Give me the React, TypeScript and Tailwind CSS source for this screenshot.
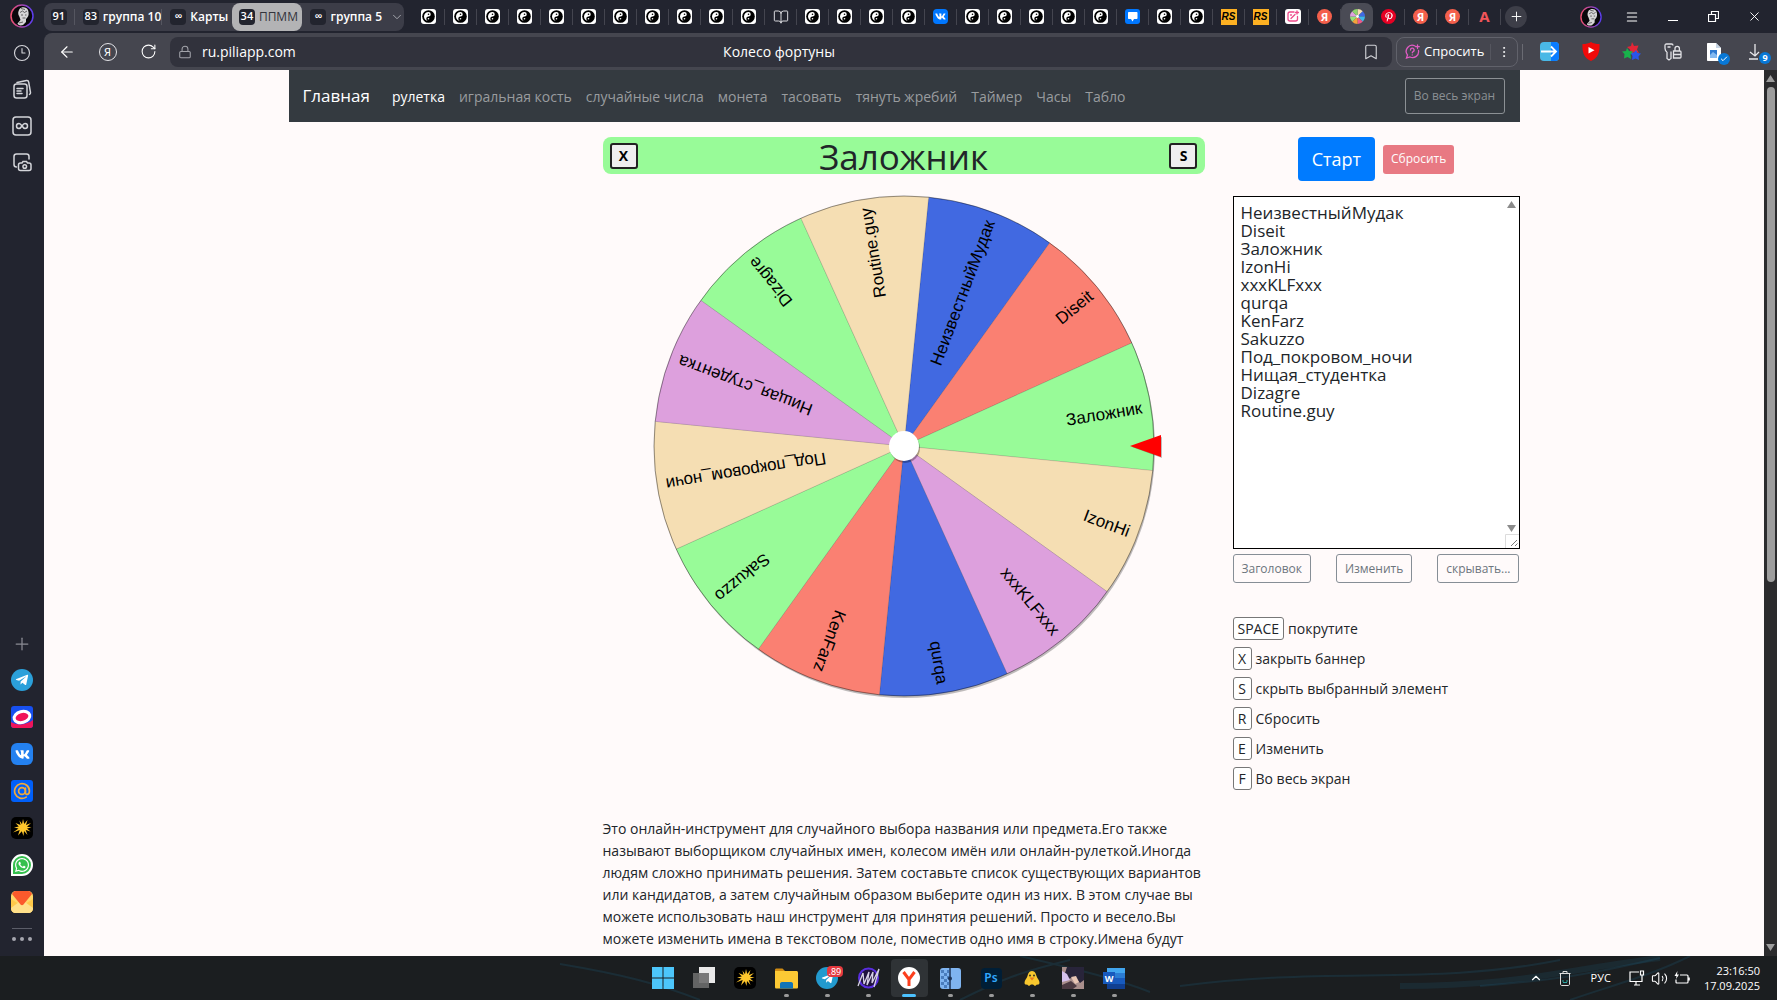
import { ReactNode, useState } from 'react';
import {
    ArrowLeft,
    Bookmark,
    BookOpen,
    Check,
    ChevronDown,
    ChevronUp,
    Clock3,
    EllipsisVertical,
    Lock,
    Menu,
    Plus,
    RotateCw,
    Volume2,
    X,
} from 'lucide-react';
import { FaPinterestP, FaTelegramPlane, FaVk, FaWhatsapp } from 'react-icons/fa';

const SLICES = [
    { name: 'НеизвестныйМудак', color: '#4169e1' },
    { name: 'Diseit', color: '#fa8072' },
    { name: 'Заложник', color: '#98fb98' },
    { name: 'IzonHi', color: '#f5deb3' },
    { name: 'xxxKLFxxx', color: '#dda0dd' },
    { name: 'qurqa', color: '#4169e1' },
    { name: 'KenFarz', color: '#fa8072' },
    { name: 'Sakuzzo', color: '#98fb98' },
    { name: 'Под_покровом_ночи', color: '#f5deb3' },
    { name: 'Нищая_студентка', color: '#dda0dd' },
    { name: 'Dizagre', color: '#98fb98' },
    { name: 'Routine.guy', color: '#f5deb3' },
];

const NAV_LINKS = ['рулетка', 'игральная кость', 'случайные числа', 'монета', 'тасовать', 'тянуть жребий', 'Таймер', 'Часы', 'Табло'];

const SHORTCUTS = [
    ['SPACE', 'покрутите'],
    ['X', 'закрыть баннер'],
    ['S', 'скрыть выбранный элемент'],
    ['R', 'Сбросить'],
    ['E', 'Изменить'],
    ['F', 'Во весь экран'],
];

const ABOUT = [
    'Это онлайн-инструмент для случайного выбора названия или предмета.Его также',
    'называют выборщиком случайных имен, колесом имён или онлайн-рулеткой.Иногда',
    'людям сложно принимать решения. Затем составьте список существующих вариантов',
    'или кандидатов, а затем случайным образом выберите один из них. В этом случае вы',
    'можете использовать наш инструмент для принятия решений. Просто и весело.Вы',
    'можете изменить имена в текстовом поле, поместив одно имя в строку.Имена будут',
];

// One letter per pinned tab: y = yin-yang, b = book, v = VK, c = chat, r = RS, i = photo editor,
// q = Yandex, w = wheel (open tab), p = Pinterest, a = letter A
const TABS = 'yyyyyyyyyyybyyyyvyyyyycyyrriqwpqqa'.split('');

const FAVICON_COLORS = ['#f5deb3', '#4169e1', '#3fb8e8', '#ef5a8a', '#f5a13a', '#98e07a', '#dda0dd', '#8fd66b'];

export default function App() {
    return (
        <div className="flex h-screen flex-col overflow-hidden bg-[#22242f] font-['Noto_Sans',sans-serif] text-white">
            <div className="flex min-h-0 flex-1">
                <Sidebar />
                <div className="flex min-w-0 flex-1 flex-col">
                    <TabStrip />
                    <Toolbar />
                    <div className="flex min-h-0 flex-1">
                        <WheelPage />
                        <PageScrollbar />
                    </div>
                </div>
            </div>
            <Taskbar />
        </div>
    );
}

/* ---------- browser chrome ---------- */

function Sidebar() {
    return (
        <aside className="flex w-11 shrink-0 flex-col items-center justify-between pb-[15px] pt-1">
            <div className="flex flex-col items-center gap-4">
                <Avatar className="size-6" />
                <button aria-label="История" className="text-[#d4d5da]"><Clock3 size={18} strokeWidth={1.5} /></button>
                <button aria-label="Коллекции" className="text-[#d4d5da]">
                    <svg width="20" height="22" viewBox="0 0 20 22" fill="none" stroke="currentColor" strokeWidth="1.5" strokeLinecap="round">
                        <rect x="2" y="6" width="13" height="14" rx="2.5" />
                        <path d="M5 4.5 14.5 2.6c1.2-.2 2 .4 2.2 1.5L18.5 14.5c.1.8-.2 1.5-1 1.9M5 10.5h6M5 13h4M5 15.5h5" />
                    </svg>
                </button>
                <button aria-label="Группы вкладок" className="text-[#d4d5da]">
                    <svg width="20" height="20" viewBox="0 0 20 20" fill="none" stroke="currentColor" strokeWidth="1.5">
                        <rect x="1" y="1" width="18" height="18" rx="3" />
                        <path d="M10 10C8.7 8 8 7.5 7 7.5a2.5 2.5 0 0 0 0 5c1 0 1.7-.5 3-2.5s2-2.5 3-2.5a2.5 2.5 0 0 1 0 5c-1 0-1.7-.5-3-2.5Z" />
                    </svg>
                </button>
                <button aria-label="Снимок экрана" className="text-[#d4d5da]">
                    <svg width="20" height="20" viewBox="0 0 20 20" fill="none" stroke="currentColor" strokeWidth="1.5" strokeLinecap="round">
                        <path d="M4.5 15C2.5 15 2 14 2 12.5V4.5C2 2.5 3 2 4.500 2h10C16.500 2 17 3 17 4.500V7" />
                        <path d="M8.500 11H10l1-1.500h3.500l1 1.500h1.500c1.500 0 2 .5 2 2v3.500c0 1.500-.5 2-2 2H8.500c-1.500 0-2-.5-2-2V13c0-1.500.5-2 2-2Z" />
                        <circle cx="12.750" cy="14.500" r="1.800" />
                    </svg>
                </button>
            </div>
            <div className="flex flex-col items-center gap-[15px]">
                <button aria-label="Добавить" className="text-[#8a8b94]"><Plus size={20} strokeWidth={1.5} /></button>
                <div className="flex size-[22px] items-center justify-center rounded-full bg-[#2ba0da]"><FaTelegramPlane size={14} className="mr-px" /></div>
                <svg width="22" height="22" viewBox="0 0 22 22">
                    <rect width="22" height="22" rx="3" fill="#1750f0" />
                    <path d="M0 16c6 4 15 3 22-2v5a3 3 0 0 1-3 3H3a3 3 0 0 1-3-3Z" fill="#f0145a" />
                    <ellipse cx="11" cy="11" rx="8" ry="5.5" fill="#f0145a" stroke="#fff" strokeWidth="3" transform="rotate(-15 11 11)" />
                </svg>
                <div className="flex size-[22px] items-center justify-center rounded-md bg-[#2481f0]"><FaVk size={15} /></div>
                <div className="flex size-[22px] items-center justify-center rounded-[3px] bg-[#005ff9]">
                    <svg width="18" height="18" viewBox="0 0 18 18" fill="none" stroke="#f0a93a" strokeWidth="1.7" strokeLinecap="round">
                        <circle cx="9" cy="9" r="3.4" />
                        <path d="M12.400 6v4.500c0 2.800 4 2.800 4-1.500a7.400 7.400 0 1 0-3.200 6.100" />
                    </svg>
                </div>
                <SparkIcon />
                <div className="flex size-[22px] items-center justify-center rounded-full rounded-bl-sm border-2 border-white bg-[#35c04e]"><FaWhatsapp size={16} /></div>
                <svg width="22" height="22" viewBox="0 0 22 22">
                    <rect width="22" height="22" rx="5" fill="#ffd76a" />
                    <path d="M0 8 11 15 22 8v9c0 3-2 5-5 5H5c-3 0-5-2-5-5Z" fill="#ffc94a" />
                    <path d="M0 17 8 11h6l8 6c0 3-2 5-5 5H5c-3 0-5-2-5-5Z" fill="#ffe08a" />
                    <path d="M1 3C2 1 3 0 5 0h12c2 0 3 1 4 3L12.500 13.500c-1 1-2 1-3 0Z" fill="#fb5a2c" />
                </svg>
                <div className="flex flex-col items-center gap-2">
                    <div className="h-px w-5 bg-[#5b5d68]" />
                    <div className="flex gap-1">
                        <span className="size-1 rounded-full bg-[#a5a6ae]" />
                        <span className="size-1 rounded-full bg-[#a5a6ae]" />
                        <span className="size-1 rounded-full bg-[#a5a6ae]" />
                    </div>
                </div>
            </div>
        </aside>
    );
}

function Avatar({ className }: { className: string }) {
    return (
        <svg className={className} viewBox="0 0 24 24">
            <defs>
                <linearGradient id="ring" x1="0" y1="0" x2="1" y2="0">
                    <stop offset="0" stopColor="#f0506e" />
                    <stop offset="1" stopColor="#5a3df0" />
                </linearGradient>
            </defs>
            <circle cx="12" cy="12" r="11" fill="#08080b" stroke="url(#ring)" strokeWidth="1.500" />
            <path d="M9.500 5c2-2.500 7-2.500 8.500 1 1 3 1 6-1 8l-1 1v3l-3 3c-3 1-5 0-5.500-1.500l3-3.500-1-3C7.500 10 8 7.500 9.500 5Z" fill="#d6d6d6" />
            <path d="M10 8.500 12.500 7l2 1.500L17 7M11 11h2m2 0h1.500M12.500 14h3M11 4.500l4 1M9 19l4-1" stroke="#444" strokeWidth=".8" fill="none" />
        </svg>
    );
}

function Chip({ children }: { children: ReactNode }) {
    return <span className="flex h-4 w-4 items-center justify-center rounded bg-[#22242e] text-[11px] font-semibold text-white">{children}</span>;
}

function TabStrip() {
    return (
        <header className="flex h-[33px] shrink-0 items-center justify-between">
            <div className="flex min-w-0 items-center">
                <div className="flex h-7 w-[360px] items-center rounded-lg bg-[#3c3d48] font-['Open_Sans',sans-serif] text-[12px] font-semibold">
                    <button className="flex w-[30px] justify-end pr-[7px]"><Chip>91</Chip></button>
                    <span className="h-4 w-px bg-[#555660]" />
                    <button className="flex w-[87px] items-center gap-1 whitespace-nowrap pl-2"><Chip>83</Chip>группа 10</button>
                    <span className="h-4 w-px bg-[#555660]" />
                    <button className="flex w-[70px] items-center gap-1 pl-2"><Chip>∞</Chip>Карты</button>
                    <button className="flex h-7 w-[71px] items-center gap-1 rounded-lg bg-[#b3b3b5] pl-[7px] font-normal text-[#33343c]"><Chip>34</Chip>ППММ</button>
                    <button className="flex flex-1 items-center gap-1 whitespace-nowrap pl-2">
                        <Chip>∞</Chip>группа 5
                        <ChevronDown size={14} strokeWidth={1.5} className="ml-1 text-[#b0b1b8]" />
                    </button>
                </div>
                <div className="ml-[9px] flex items-center">
                    {TABS.map((tab, i) => (
                        <button
                            key={i}
                            aria-label={`Вкладка ${i + 1}`}
                            className={tab === 'w' ? 'flex h-7 w-8 items-center justify-center rounded-lg bg-[#4a4b55]' : 'flex h-4 w-8 items-center justify-center border-r border-[#44454f]'}
                        >
                            <Favicon kind={tab} />
                        </button>
                    ))}
                </div>
                <button aria-label="Новая вкладка" className="ml-1 flex size-[22px] items-center justify-center rounded-full bg-[#3d3e48]"><Plus size={15} strokeWidth={1.5} /></button>
            </div>
            <div className="flex items-center">
                <div className="flex w-[41px] justify-center"><Avatar className="size-[22px]" /></div>
                <button aria-label="Меню" className="flex w-[41px] justify-center"><Menu size={14} strokeWidth={1.8} /></button>
                <button aria-label="Свернуть" className="flex w-[41px] justify-center pt-2"><span className="h-px w-2.5 bg-white" /></button>
                <button aria-label="Восстановить" className="flex w-[41px] justify-center">
                    <svg width="11" height="11" viewBox="0 0 11 11" fill="none" stroke="#fff" strokeWidth="1.2">
                        <path d="M3.5 3.5v-3h7v7h-3M.5 3.5h7v7h-7Z" />
                    </svg>
                </button>
                <button aria-label="Закрыть" className="flex w-[41px] justify-center"><X size={15} strokeWidth={1.5} /></button>
                <span className="w-0.5" />
            </div>
        </header>
    );
}

function Favicon({ kind }: { kind: string }) {
    switch (kind) {
        case 'b':
            return <BookOpen size={16} strokeWidth={1.5} className="text-[#d9d9de]" />;
        case 'v':
            return <span className="flex size-[15px] items-center justify-center rounded bg-[#0077ff]"><FaVk size={11} /></span>;
        case 'c':
            return (
                <svg width="15" height="15" viewBox="0 0 15 15">
                    <rect width="15" height="15" rx="3" fill="#0077ff" />
                    <path d="M4 3h7.500c.6 0 1 .4 1 1v5c0 .6-.4 1-1 1H9l-1.500 2.500L6 10H4c-.6 0-1-.4-1-1V4c0-.6.4-1 1-1Z" fill="#fff" />
                </svg>
            );
        case 'r':
            return <span className="flex size-4 items-center justify-center bg-[#fdb022] font-['Liberation_Sans',sans-serif] text-[10px] font-bold italic text-black">RS</span>;
        case 'i':
            return (
                <svg width="16" height="15" viewBox="0 0 16 15" fill="none" stroke="#ee4b8b" strokeWidth="1.3" strokeLinecap="round">
                    <rect width="16" height="15" rx="3" fill="#fff" stroke="none" />
                    <path d="M9 3H5C3.500 3 3 3.500 3 5v5c0 1.500.5 2 2 2h5.500c1.500 0 2-.5 2-2V7.500M6 9.500l4-4M12 2v3M10.500 3.500h3M5.500 6h1" />
                </svg>
            );
        case 'q':
            return <span className="flex size-[15px] items-center justify-center rounded-full bg-[#f4604c] text-[11px] font-bold leading-none">Я</span>;
        case 'w':
            return (
                <svg width="15" height="15" viewBox="-8 -8 16 16">
                    {FAVICON_COLORS.map((color, n) => (
                        <path key={color} d="M0 0 8 0A8 8 0 0 1 5.660 5.660Z" transform={`rotate(${n * 45 - 90})`} fill={color} />
                    ))}
                    <circle r="1.500" fill="#fff" />
                </svg>
            );
        case 'p':
            return <span className="flex size-[15px] items-center justify-center rounded-full bg-[#e60023]"><FaPinterestP size={10} /></span>;
        case 'a':
            return <span className="text-[15px] font-bold leading-none text-[#f2555a]">A</span>;
        default:
            return (
                <svg width="15" height="15" viewBox="0 0 15 15">
                    <rect width="15" height="15" rx="3" fill="#fff" />
                    <circle cx="7.500" cy="7.500" r="6.300" fill="#000" />
                    <path d="M7.500 3a2.250 2.250 0 0 1 0 4.500 2.250 2.250 0 0 0 0 4.500 4.500 4.500 0 0 1 0-9Z" fill="#fff" />
                    <circle cx="7.500" cy="5.200" r=".8" fill="#000" />
                    <circle cx="7.500" cy="9.700" r=".8" fill="#fff" />
                </svg>
            );
    }
}

function Toolbar() {
    return (
        <div className="flex h-[37px] shrink-0 items-center rounded-tl-lg bg-[#45464f]">
            <div className="flex w-[126px] shrink-0">
                <button aria-label="Назад" className="flex w-[41px] justify-center pl-1"><ArrowLeft size={18} strokeWidth={1.5} /></button>
                <button aria-label="Яндекс" className="flex w-[41px] justify-center pl-1">
                    <span className="flex size-[18px] items-center justify-center rounded-full border border-[#e4e4e8] text-[11px] leading-none">Я</span>
                </button>
                <button aria-label="Обновить" className="flex w-[41px] justify-center pl-1"><RotateCw size={17} strokeWidth={1.5} /></button>
            </div>
            <div className="flex h-[30px] flex-1 items-center rounded-lg bg-[#31323c] font-['Open_Sans',sans-serif] text-[14px]">
                <div className="flex flex-1 items-center gap-2.5 pl-2">
                    <Lock size={14} strokeWidth={1.8} className="text-[#a2a3aa]" />
                    <span>ru.piliapp.com</span>
                </div>
                <span>Колесо фортуны</span>
                <div className="flex flex-1 justify-end pr-3"><Bookmark size={18} strokeWidth={1.5} className="text-[#d0d1d6]" /></div>
            </div>
            <div className="ml-1 flex h-[30px] w-[122px] items-center rounded-lg border border-[#61626b] text-[13px]">
                <button className="flex flex-1 items-center gap-1 pl-2 font-['Open_Sans',sans-serif]">
                    <svg width="15" height="15" viewBox="0 0 15 15" fill="none" stroke="#e05bc4" strokeWidth="1.3" strokeLinecap="round">
                        <path d="M10 2A6 6 0 0 0 2.500 11L1.500 14l3.500-1a6 6 0 0 0 8.500-6.500M5.500 6a1.800 1.800 0 1 1 2.600 1.600c-.6.3-.8.6-.8 1.200M7.300 10.800v.1M12.500 1v3.500M10.800 2.700h3.500" />
                    </svg>
                    Спросить
                </button>
                <span className="h-4 w-px bg-[#55565f]" />
                <button aria-label="Ещё" className="flex w-[26px] justify-center"><EllipsisVertical size={14} strokeWidth={1.5} /></button>
            </div>
            <span className="ml-1 h-4 w-px bg-[#6a6b73]" />
            <div className="ml-1.5 flex shrink-0 items-center">
                <ToolbarItem label="Перевод">
                    <svg width="19" height="19" viewBox="0 0 19 19">
                        <rect width="19" height="19" rx="4" fill="#4ab8e6" />
                        <path d="M11 0h4a4 4 0 0 1 4 4v11a4 4 0 0 1-4 4h-4Z" fill="#0a7cff" />
                        <path d="M1 9.500h15M11 4.500l5 5-5 5" stroke="#fff" strokeWidth="1.800" fill="none" />
                    </svg>
                </ToolbarItem>
                <ToolbarItem label="Видео">
                    <svg width="18" height="19" viewBox="0 0 18 19">
                        <path d="M9 0c2 1.500 5 2 8.500 2C18 10 16 16 9 19 2 16 0 10 .5 2 4 2 7 1.500 9 0Z" fill="#f00a0a" />
                        <path d="M6.500 5v6.500L12.500 8.200Z" fill="#fff" />
                    </svg>
                </ToolbarItem>
                <ToolbarItem label="Расширения">
                    <svg width="19" height="19" viewBox="0 0 19 19">
                        <path d="m10 0 2 4 4.500-.5L15 7.500l2 3.500-4.500-1L9 12 8 7.500 5 5l4-1Z" fill="#e32636" />
                        <path d="m14 8 1.500 3 3.500.5-2.500 3 .5 3.500-3.500-1.500L10 18l.5-4L8.500 11l3.500-.5Z" fill="#2b55e8" />
                        <path d="m5 6 2 3 4 .5L8.500 12.500 9 17l-3.500-2L2 16.500 2.500 12 0 9.500l4-.5Z" fill="#18b34b" />
                    </svg>
                </ToolbarItem>
                <ToolbarItem label="Пароли">
                    <svg width="18" height="18" viewBox="0 0 18 18" fill="none" stroke="#e2e2e6" strokeWidth="1.300">
                        <path d="M3 9C1.700 8.200 1 7 1 5.200V2.500C1 1.500 1.500 1 2.500 1h5C8.500 1 9 1.500 9 2.500M3 9v6.500l2 1.500 2-1.500V8.500M3.500 4h3M9.500 8H16c.6 0 1 .4 1 1v5c0 .6-.4 1-1 1H9.500ZM11 8V5.500a2.200 2.200 0 0 1 4.400 0V8M10 11.500h7" />
                    </svg>
                </ToolbarItem>
                <ToolbarItem label="Документ">
                    <svg width="14" height="18" viewBox="0 0 14 18">
                        <path d="M0 1c0-.6.4-1 1-1h8l5 5v12c0 .6-.4 1-1 1H1c-.6 0-1-.4-1-1Z" fill="#fff" />
                        <path d="m9 0 5 5H9Z" fill="#c6d4e4" />
                        <path d="M3 7h7v8H3Z" fill="#2e7ad1" />
                        <path d="m3 12 3-3 4 3v3H3Z" fill="#83b9f0" />
                    </svg>
                    <span className="absolute -bottom-1 right-1 flex size-3 items-center justify-center rounded-full bg-[#0878d6]"><Check size={8} strokeWidth={3} /></span>
                </ToolbarItem>
                <ToolbarItem label="Загрузки">
                    <svg width="14" height="16" viewBox="0 0 14 16" fill="none" stroke="#e8e8ec" strokeWidth="1.300"><path d="M7 0v12M2 8l5 4 4-4M1 15h9" /></svg>
                    <span className="absolute -bottom-1 right-1 flex size-3 items-center justify-center rounded-full bg-[#0878d6] text-[9px] font-bold leading-none">9</span>
                </ToolbarItem>
                <span className="w-0.5" />
            </div>
        </div>
    );
}

function ToolbarItem({ label, children }: { label: string; children: ReactNode }) {
    return <button aria-label={label} className="relative flex w-[41px] items-center justify-center">{children}</button>;
}

function PageScrollbar() {
    return (
        <div className="flex w-[13px] shrink-0 flex-col items-center justify-between bg-[#2b2b2d] py-[5px]">
            <div className="flex h-full flex-col items-center gap-[5px]">
                <svg width="9" height="7" viewBox="0 0 9 7"><path d="M4.500 0 9 7H0Z" fill="#9d9d9d" /></svg>
                <div className="h-[57%] w-2 rounded-full bg-[#9d9d9d]" />
            </div>
            <svg width="9" height="7" viewBox="0 0 9 7"><path d="M4.500 7 0 0h9Z" fill="#9d9d9d" /></svg>
        </div>
    );
}

/* ---------- wheel page ---------- */

function WheelPage() {
    const [names, setNames] = useState(SLICES.map((s) => s.name).join('\n'));

    return (
        <main className="min-w-0 flex-1 overflow-hidden bg-[#fffafa] font-['Open_Sans',sans-serif] text-[#212529]">
            <div className="mx-auto max-w-[1231px]">
                <nav className="flex h-[52px] items-center bg-[#343a40] pl-3.5 pr-[15px]">
                    <a href="#" className="mr-[22px] text-[17px] text-white">Главная</a>
                    <div className="flex flex-1 gap-3.5 whitespace-nowrap text-[14px]">
                        {NAV_LINKS.map((link, i) => (
                            <a key={link} href="#" className={i === 0 ? 'text-white' : 'text-[#999c9f]'}>{link}</a>
                        ))}
                    </div>
                    <button className="h-9 w-[100px] whitespace-nowrap rounded-[3px] border border-[#8b9094] text-[12px] text-[#8b9094]">Во весь экран</button>
                </nav>

                <div className="grid grid-cols-[314fr_602fr_315fr] pt-[15px]">
                    <div />
                    <section>
                        <div className="flex h-[37px] items-center justify-between rounded-lg bg-[#98fb98] px-[7px]">
                            <button className="h-[26px] w-[28px] rounded-[3px] border-2 border-[#222] bg-[#efefef] text-[14px] font-bold leading-none text-black">X</button>
                            <h1 className="pt-0.5 text-[35px] leading-none">Заложник</h1>
                            <button className="h-[26px] w-[28px] rounded-[3px] border-2 border-[#222] bg-[#efefef] text-[14px] font-bold leading-none text-black">S</button>
                        </div>
                        <div className="mt-[17px] flex justify-center"><Wheel /></div>
                        <p className="mt-[117px] whitespace-nowrap text-[14px] leading-[22px]">
                            {ABOUT.map((line) => <span key={line} className="block">{line}</span>)}
                        </p>
                    </section>

                    <aside className="pl-7">
                        <div className="flex h-11 items-center justify-center gap-2">
                            <button className="h-11 rounded bg-[#007bff] px-3.5 text-[18px] text-white">Старт</button>
                            <button className="h-[29px] rounded-[3px] bg-[#dc3545] px-2 text-[12px] font-medium text-white opacity-65">Сбросить</button>
                        </div>
                        <div className="relative mt-[15px]">
                            <textarea
                                aria-label="Имена"
                                value={names}
                                onChange={(e) => setNames(e.target.value)}
                                className="block h-[353px] w-full resize-none overflow-hidden border border-black bg-white px-[7px] py-[7px] text-[17px] leading-[18px] outline-none"
                            />
                            <svg className="absolute right-1 top-[5px]" width="9" height="7" viewBox="0 0 9 7"><path d="M4.500 0 9 7H0Z" fill="#8b8b8b" /></svg>
                            <svg className="absolute bottom-[17px] right-1" width="9" height="7" viewBox="0 0 9 7"><path d="M4.500 7 0 0h9Z" fill="#8b8b8b" /></svg>
                            <svg className="absolute bottom-px right-px" width="14" height="14" viewBox="0 0 14 14" fill="none">
                                <path d="M.5 14V.5H14" stroke="#dcdcdc" />
                                <path d="m6 12 6-6M10 12l2.500-2.500" stroke="#777" />
                            </svg>
                        </div>
                        <div className="mt-[5px] flex justify-between text-[12px] text-[#6c757d]">
                            <button className="h-[29px] rounded-[3px] border border-[#868e96] px-2">Заголовок</button>
                            <button className="h-[29px] rounded-[3px] border border-[#868e96] px-2">Изменить</button>
                            <button className="h-[29px] rounded-[3px] border border-[#868e96] px-2">скрывать...</button>
                        </div>
                        <ul className="mt-[34px] flex flex-col gap-[7px] text-[14px]">
                            {SHORTCUTS.map(([key, text]) => (
                                <li key={key} className="flex h-[23px] items-center gap-1">
                                    <kbd className="flex h-[23px] min-w-[19px] items-center justify-center rounded-[3px] border border-[#777] bg-white px-1 font-['Open_Sans',sans-serif]">{key}</kbd>
                                    {text}
                                </li>
                            ))}
                        </ul>
                    </aside>
                </div>
            </div>
        </main>
    );
}

function Wheel() {
    const step = 360 / SLICES.length;
    const start = -84.35;
    const rad = (step * Math.PI) / 180;
    const edge = `M0 0 250 0A250 250 0 0 1 ${250 * Math.cos(rad)} ${250 * Math.sin(rad)}Z`;

    return (
        <svg width="520" height="510" viewBox="-260 -255 520 510" className="font-['Liberation_Sans',sans-serif]">
            <circle cx="1" cy="2" r="250" fill="#000" opacity=".25" />
            {SLICES.map((slice, i) => (
                <g key={slice.name} transform={`rotate(${start + i * step})`}>
                    <path d={edge} fill={slice.color} stroke="#000" strokeOpacity=".2" strokeWidth=".5" />
                    <text x="241" y="1" transform={`rotate(${step / 2})`} textAnchor="end" dominantBaseline="central" fontSize="17">{slice.name}</text>
                </g>
            ))}
            <circle r="250" fill="none" stroke="#000" strokeOpacity=".5" strokeWidth=".7" />
            <circle cx="1" cy="2" r="15" fill="#000" opacity=".3" />
            <circle r="15" fill="#fff" />
            <path d="m228 1 30-10v21Z" fill="#000" opacity=".25" />
            <path d="m226 0 31-11v22Z" fill="#f00" />
        </svg>
    );
}

/* ---------- desktop taskbar ---------- */

function SparkIcon() {
    return (
        <svg width="22" height="22" viewBox="0 0 22 22">
            <rect width="22" height="22" rx="5" fill="#000" />
            <path d="m12 2 1.200 5 3.300-4-1.500 5L20 6l-4 3.800 4.500.7-4.500 1 3.500 3-4.800-1.500L16.500 18 13 14l-.5 5-1.700-4.700L7 18.500 8.700 13 2 15.500l5.500-4L3 10.500l4.800-1L4.500 6l5 2L8.500 3.500l2.500 3.700Z" fill="#ffc72c" />
        </svg>
    );
}

function TaskItem({ label, running, active, children }: { label: string; running?: boolean; active?: boolean; children: ReactNode }) {
    return (
        <button aria-label={label} className={`relative flex h-[38px] w-[37px] items-center justify-center rounded ${active ? 'bg-[#2f3336]' : ''}`}>
            {children}
            {running && <span className="absolute bottom-0 h-[3px] w-[5px] rounded-full bg-[#9a9a9a]" />}
            {active && <span className="absolute bottom-0 h-[3px] w-3.5 rounded-full bg-[#4cc2ff]" />}
        </button>
    );
}

function Taskbar() {
    return (
        <footer className="relative grid h-11 shrink-0 grid-cols-[1fr_auto_1fr] items-center bg-[#1b1e20]">
            <svg className="absolute inset-0 size-full" viewBox="0 0 1777 44" preserveAspectRatio="none" fill="none" stroke="#1d5a78" strokeOpacity=".25">
                <path d="M560 8c60 10 100 20 140 36M960 44c40-20 60-28 110-40M1020 0c60 14 100 24 130 36M1180 30c150-20 250 0 380-26M1570 44c40-14 80-24 120-44M1480 30c80-6 120-14 180-28" strokeWidth="2" />
                <path d="M1400 30c120 0 160-16 260-28" strokeWidth="6" strokeOpacity=".2" />
            </svg>
            <div />
            <div className="relative flex gap-1">
                <TaskItem label="Пуск">
                    <svg width="22" height="22" viewBox="0 0 22 22" fill="#4cc6fb"><path d="M0 0h10.500v10.500H0ZM11.500 0H22v10.500H11.500ZM0 11.500h10.500V22H0ZM11.500 11.500H22V22H11.500Z" /></svg>
                </TaskItem>
                <TaskItem label="Представление задач">
                    <svg width="22" height="22" viewBox="0 0 22 22"><rect x="6" width="16" height="16" fill="#e9e9e9" /><rect y="6" width="16" height="15" fill="#6c6c6c" opacity=".9" /></svg>
                </TaskItem>
                <TaskItem label="Spark"><SparkIcon /></TaskItem>
                <TaskItem label="Проводник" running>
                    <svg width="23" height="21" viewBox="0 0 23 21">
                        <path d="M0 2c0-1 .5-1.500 1.500-1.500h6L10 3H0Z" fill="#d18c12" />
                        <path d="M0 3h21c1.500 0 2 .5 2 2v14c0 1-.5 1.500-1.500 1.500h-20C.5 20.500 0 20 0 19Z" fill="#fcc934" />
                        <path d="M5 20.500V16c0-1 .5-2 2-2h9c1.500 0 2 1 2 2v4.500Z" fill="#1175b8" />
                    </svg>
                </TaskItem>
                <TaskItem label="Telegram" running>
                    <span className="flex size-[22px] items-center justify-center rounded-full bg-[#229ace]"><FaTelegramPlane size={13} /></span>
                    <span className="absolute left-[18px] top-[7px] rounded-sm bg-[#e5393f] px-0.5 text-[9px] leading-[11px]">.89</span>
                </TaskItem>
                <TaskItem label="Музыка" running>
                    <svg width="23" height="22" viewBox="0 0 23 22" fill="none">
                        <circle cx="11.500" cy="11" r="9.500" fill="#20123f" stroke="#5a2ee0" strokeWidth="2" />
                        <path d="M1 19 6 6l1 11 5-12-2 13 6-13-1 11 7-14-5 18" stroke="#d8d2e8" strokeWidth="1.300" />
                    </svg>
                </TaskItem>
                <TaskItem label="Яндекс Браузер" active>
                    <svg width="22" height="22" viewBox="0 0 22 22">
                        <circle cx="11" cy="11" r="11" fill="#fff" />
                        <path d="m5.500 5 5.500 7.500L16.500 5M11 12v7" fill="none" stroke="#fc3f1d" strokeWidth="3" />
                    </svg>
                </TaskItem>
                <TaskItem label="Архив" running>
                    <svg width="21" height="21" viewBox="0 0 21 21">
                        <rect width="21" height="21" rx="3" fill="#7fb4f0" />
                        <path d="M1 2h3v3H1ZM4 5h3v3H4ZM1 8h3v3H1ZM4 11h3v3H4ZM1 14h3v3H1ZM4 17h3v3H4ZM7 2h2v3H7ZM7 8h2v3H7ZM7 14h2v3H7Z" fill="#4a7dbd" />
                        <path d="M10 0v21" stroke="#1d3558" strokeWidth="1.500" />
                        <circle cx="10" cy="10.500" r="2" fill="#1d3558" />
                    </svg>
                </TaskItem>
                <TaskItem label="Photoshop" running>
                    <span className="flex size-[21px] items-center justify-center rounded bg-[#001e36] text-[12px] font-semibold leading-none text-[#31a8ff]">Ps</span>
                </TaskItem>
                <TaskItem label="Цыплёнок" running>
                    <svg width="18" height="18" viewBox="0 0 18 18">
                        <path d="M9 2c3 0 4 3 4.500 5 1 3 3 4 3 7 0 1-1 2-2.500 1.500L12 17l-2-1.500h-2L6 17l-2-1.500C2.500 16 1.500 15 1.500 14c0-3 2-4 3-7C5 5 6 2 9 2Z" fill="#f8c72e" />
                        <path d="M6.500 8.500h5L9 11.500Z" fill="#e9781c" />
                        <circle cx="7" cy="6.500" r=".9" fill="#222" />
                        <circle cx="11" cy="6.500" r=".9" fill="#222" />
                    </svg>
                </TaskItem>
                <TaskItem label="Игра" running>
                    <svg width="22" height="22" viewBox="0 0 22 22">
                        <path d="M0 0h22v22H0Z" fill="#a98f8c" />
                        <path d="M5 0h17v13l-4 3-5-6-7 2-3-6Z" fill="#28243a" />
                        <path d="m0 4 5 3 3 6-8 2Z" fill="#d5c1ee" />
                        <path d="m9 10 5-1 3 6-4 2Z" fill="#e8c6b5" />
                        <path d="m0 18 9-4 6 5-4 3H0Z" fill="#4b3a42" />
                    </svg>
                </TaskItem>
                <TaskItem label="Word" running>
                    <span className="relative ml-1 flex h-[21px] w-[18px] items-center bg-[linear-gradient(#41a5ee_0_25%,#2b7cd3_25%_50%,#185abd_50%_75%,#103f91_75%)]">
                        <span className="absolute -left-1 flex size-3 items-center justify-center bg-[#185abd] text-[9px] font-bold leading-none">W</span>
                    </span>
                </TaskItem>
            </div>
            <div className="relative flex items-center justify-end pr-[17px] text-[12px]">
                <ChevronUp size={14} className="mr-4" />
                <svg width="12" height="15" viewBox="0 0 12 15" fill="none" stroke="#ddd" className="mr-5">
                    <path d="M.5 2.500h11M4 2V.5h4V2M1.500 3v10c0 1 .5 1.500 1.500 1.500h6c1 0 1.500-.5 1.500-1.500V3" />
                    <path d="M4 11.500h4M4 9v2M8 9v2" stroke="#2aa6a0" />
                </svg>
                <span className="mr-[18px] font-['Open_Sans',sans-serif] text-[11px]">РУС</span>
                <svg width="16" height="16" viewBox="0 0 16 16" fill="none" stroke="#fff" strokeWidth="1.200" className="mr-1.5">
                    <path d="M10 2H1v9.500h12V8M5 15h6M7 11.500V15M11.500 1h3v4h-3ZM13 5v6.500" />
                </svg>
                <Volume2 size={17} strokeWidth={1.5} className="mr-1.5" />
                <svg width="16" height="14" viewBox="0 0 16 14" fill="none" stroke="#fff" strokeWidth="1.200" className="mr-3.5">
                    <path d="M6 4h7c.7 0 1 .3 1 1v6c0 .7-.3 1-1 1H3c-.7 0-1-.3-1-1V8.500M15.200 6.500v3" />
                    <path d="M3.500 0 .5 5h2L2 8l3-4.500H3Z" fill="#fff" stroke="none" />
                </svg>
                <div className="text-right font-['Open_Sans',sans-serif] text-[11px] leading-[15px]">
                    <div>23:16:50</div>
                    <div>17.09.2025</div>
                </div>
            </div>
        </footer>
    );
}
